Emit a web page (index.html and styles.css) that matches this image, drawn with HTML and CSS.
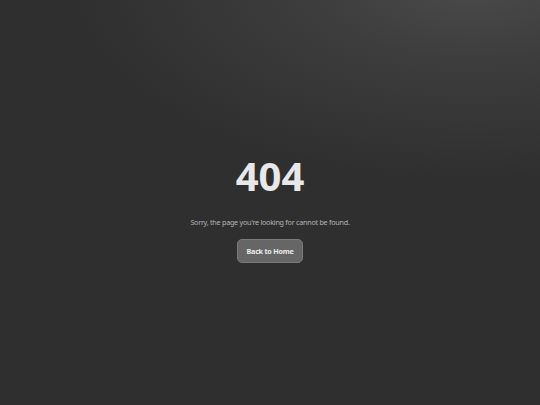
FILE: index.html
```html
<!DOCTYPE html>
<html lang="en">
<head>
<meta charset="utf-8">
<link rel="stylesheet" href="styles.css">
</head>
<body>
<main class="page">
  <h1 class="code">404</h1>
  <p class="message">Sorry, the page you're looking for cannot be found.</p>
  <a class="home" href="#">Back to Home</a>
</main>
</body>
</html>
```
FILE: styles.css
```css
html, body {
  margin: 0;
  height: 100%;
}
body {
  font-family: "Noto Sans", "Open Sans", sans-serif;
  background-color: #2f2f2f;
  background-image: radial-gradient(ellipse 400px 200px at 470px -20px, #4b4b4b 0%, rgba(66,66,66,0.75) 40%, rgba(47,47,47,0) 100%);
  color: #e6e6e6;
}
.page {
  box-sizing: border-box;
  height: 100%;
  padding-top: 14px;
  display: flex;
  flex-direction: column;
  align-items: center;
  justify-content: center;
}
.code {
  margin: 0;
  font-size: 40px;
  font-weight: 700;
  line-height: 1;
  color: #e8e8e8;
}
.message {
  margin: 21px 0 0;
  font-size: 7.2px;
  letter-spacing: -0.25px;
  color: #b4b4b4;
}
.home {
  margin-top: 12px;
  padding: 6px 9px;
  font-size: 7.2px;
  letter-spacing: -0.25px;
  font-weight: 700;
  color: #ececec;
  text-decoration: none;
  background: #666;
  border: 1px solid #7a7a7a;
  border-radius: 5px;
}
```
